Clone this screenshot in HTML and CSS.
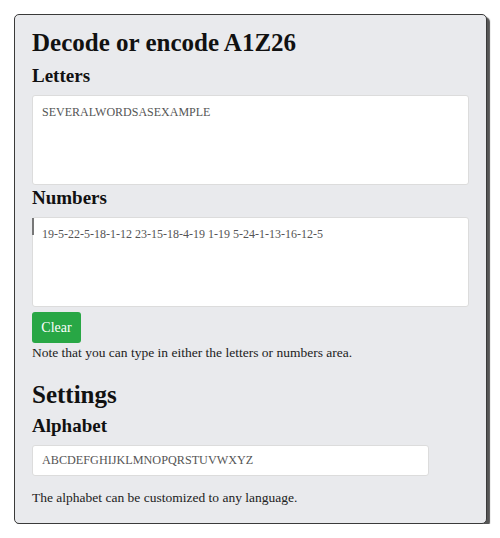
FILE: index.html
```html
<!DOCTYPE html>
<html>
<head>
<meta charset="utf-8">
<link rel="stylesheet" href="styles.css">
</head>
<body>
<div class="card">
  <h1 class="title">Decode or encode A1Z26</h1>
  <h2 class="label">Letters</h2>
  <textarea class="area">SEVERALWORDSASEXAMPLE</textarea>
  <h2 class="label">Numbers</h2>
  <div class="wrap">
    <textarea class="area">19-5-22-5-18-1-12 23-15-18-4-19 1-19 5-24-1-13-16-12-5</textarea>
    <span class="caret"></span>
  </div>
  <button class="btn">Clear</button>
  <p class="note">Note that you can type in either the letters or numbers area.</p>
  <h1 class="title settings">Settings</h1>
  <h2 class="label">Alphabet</h2>
  <input class="field" type="text" value="ABCDEFGHIJKLMNOPQRSTUVWXYZ">
  <p class="note hint">The alphabet can be customized to any language.</p>
</div>
</body>
</html>
```
FILE: styles.css
```css
* { box-sizing: border-box; }
body {
  margin: 0;
  background: #ffffff;
  font-family: "Liberation Serif", "DejaVu Serif", serif;
}
.card {
  margin: 14px 0 0 14px;
  width: 473px;
  height: 510px;
  background: #e9eaed;
  border: 1px solid #3a3a3a;
  border-radius: 5px;
  box-shadow: 3px 3px 1px #555;
  padding: 12px 17px 0 17px;
  display: flex;
  flex-direction: column;
  align-items: flex-start;
}
.title {
  margin: 0 0 6px 0;
  font-size: 25px;
  line-height: 32px;
  font-weight: bold;
  color: #111;
}
.label {
  margin: 0 0 8px 0;
  font-size: 19px;
  line-height: 22px;
  font-weight: bold;
  color: #111;
}
.wrap {
  position: relative;
}
.area {
  display: block;
  width: 437px;
  height: 90px;
  margin: 0 0 2px 0;
  padding: 7px 9px;
  background: #fff;
  border: 1px solid #dcdcdc;
  border-radius: 3px;
  font-family: "Liberation Serif", serif;
  font-size: 12px;
  line-height: 18px;
  color: #555;
  resize: none;
  outline: none;
}
.caret {
  position: absolute;
  left: 0;
  top: 1px;
  width: 2px;
  height: 17px;
  background: #777;
}
.btn {
  margin: 3px 0 0 0;
  width: 49px;
  height: 31px;
  background: #28a745;
  color: #fff;
  border: none;
  border-radius: 3px;
  font-family: "Liberation Serif", serif;
  font-size: 14px;
  padding: 0;
}
.note {
  margin: 1px 0 0 0;
  font-size: 13.5px;
  line-height: 18px;
  color: #222;
}
.settings {
  margin-top: 17px;
  margin-bottom: 4px;
}
.field {
  display: block;
  width: 397px;
  height: 31px;
  margin: 0;
  padding: 0 9px;
  background: #fff;
  border: 1px solid #dcdcdc;
  border-radius: 3px;
  font-family: "Liberation Serif", serif;
  font-size: 12.2px;
  color: #555;
  outline: none;
}
.hint {
  margin-top: 13px;
}
```
